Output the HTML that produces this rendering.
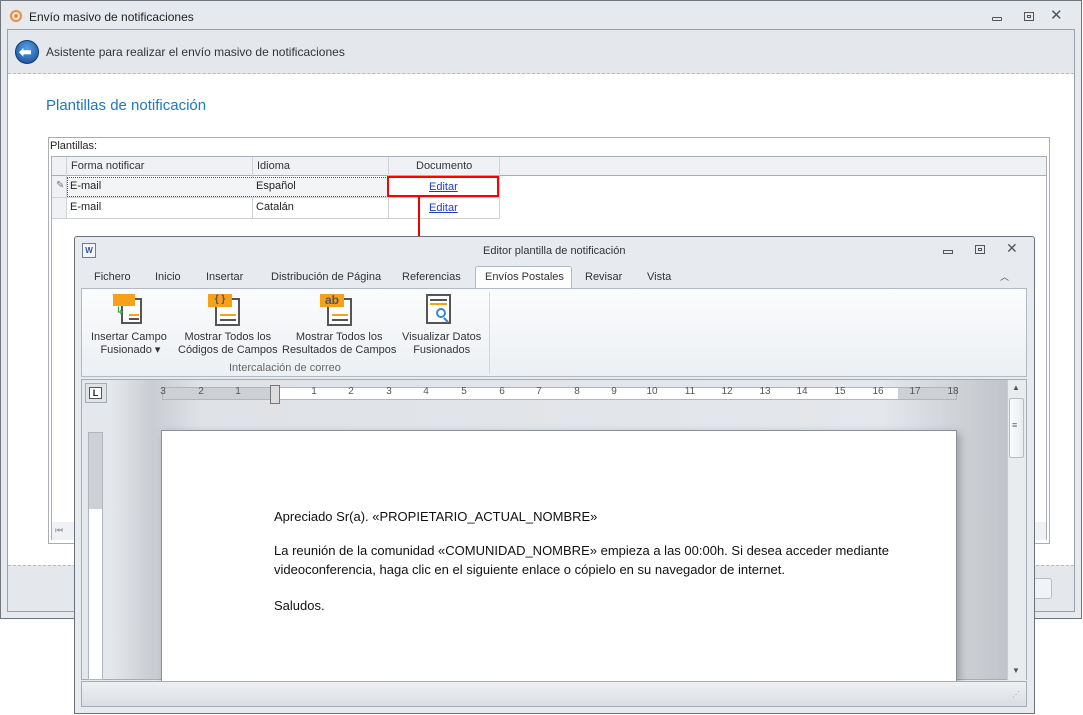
<!DOCTYPE html>
<html><head><meta charset="utf-8"><style>
*{box-sizing:border-box;margin:0;padding:0}
body{width:1083px;height:715px;background:#fff;position:relative;overflow:hidden;font-family:"Liberation Sans",sans-serif;font-size:12px;color:#222}
.a{position:absolute}
.t{position:absolute;white-space:nowrap}
.rn{position:absolute;top:-1px;font-size:10px;color:#555;transform:translateX(-50%)}
</style></head><body>
<!-- outer window -->
<div class="a" style="left:0;top:0;width:1082px;height:619px;background:#e6e9ee;border:1px solid #6f757c"></div>
<div class="a" style="left:10px;top:10px;width:12px;height:12px;border-radius:50%;border:2px solid #f08a3c;"></div>
<div class="a" style="left:14px;top:14px;width:4px;height:4px;border-radius:50%;background:#f08a3c"></div>
<div class="t" style="left:29px;top:10px;font-size:12px;color:#222">Envío masivo de notificaciones</div>
<div class="a" style="left:992px;top:17px;width:10px;height:4px;border:1px solid #555;border-radius:1px"></div>
<div class="a" style="left:1024px;top:12px;width:10px;height:9px;border:1px solid #555"><div style="margin:2px auto;width:4px;height:3px;border:1px solid #555"></div></div>
<div class="t" style="left:1050px;top:6px;font-size:15px;color:#555">✕</div>
<div class="a" style="left:7px;top:29px;width:1068px;height:583px;border:1px solid #9aa0a7;background:#fff"></div>
<div class="a" style="left:8px;top:30px;width:1066px;height:44px;background:#e4e8ed;border-bottom:1px dashed #b5bcc5"></div>
<div class="a" style="left:15px;top:40px;width:24px;height:24px;border-radius:50%;background:radial-gradient(circle at 50% 35%,#5aa0e6,#11468f);border:1px solid #0c3a78"></div>
<div class="t" style="left:19px;top:43px;color:#fff;font-size:15px;font-weight:bold">⬅</div>
<div class="t" style="left:46px;top:45px;font-size:12px;color:#333">Asistente para realizar el envío masivo de notificaciones</div>
<div class="t" style="left:46px;top:97px;font-size:15px;color:#1e78c2">Plantillas de notificación</div>
<div class="a" style="left:8px;top:565px;width:1066px;height:46px;background:#e4e8ed;border-top:1px dashed #b5bcc5"></div>
<div class="a" style="left:1000px;top:578px;width:52px;height:21px;border:1px solid #b8bec6;border-radius:3px;background:#f1f3f6"></div>
<!-- group -->
<div class="a" style="left:48px;top:137px;width:1002px;height:407px;border:1px solid #a9aeb4"></div>
<div class="t" style="left:50px;top:140px;font-size:11px">Plantillas:</div>
<div class="a" style="left:51px;top:156px;width:996px;height:384px;border:1px solid #a9aeb4"></div>
<div class="a" style="left:52px;top:157px;width:994px;height:19px;background:#eff1f5;border-bottom:1px solid #a9aeb4"></div>
<div class="a" style="left:52px;top:157px;width:448px;height:62px;border-right:1px solid #cfd3d8"></div>
<div class="a" style="left:66px;top:157px;width:1px;height:62px;background:#cfd3d8"></div>
<div class="a" style="left:252px;top:157px;width:1px;height:62px;background:#cfd3d8"></div>
<div class="a" style="left:388px;top:157px;width:1px;height:62px;background:#cfd3d8"></div>
<div class="a" style="left:52px;top:176px;width:14px;height:42px;background:#f0f1f4"></div>
<div class="a" style="left:67px;top:177px;width:321px;height:20px;background:#f3f4f6;border:1px dotted #555"></div>
<div class="a" style="left:52px;top:197px;width:448px;height:1px;background:#cfd3d8"></div>
<div class="a" style="left:52px;top:218px;width:448px;height:1px;background:#cfd3d8"></div>
<div class="t" style="left:71px;top:160px;font-size:11px;color:#333">Forma notificar</div>
<div class="t" style="left:257px;top:160px;font-size:11px;color:#333">Idioma</div>
<div class="t" style="left:416px;top:160px;font-size:11px;color:#333">Documento</div>
<div class="t" style="left:56px;top:180px;font-size:10px;color:#777">✎</div>
<div class="t" style="left:70px;top:180px;font-size:11px">E-mail</div>
<div class="t" style="left:256px;top:180px;font-size:11px">Español</div>
<div class="t" style="left:429px;top:181px;font-size:11px;color:#1a3cc8;text-decoration:underline">Editar</div>
<div class="t" style="left:70px;top:201px;font-size:11px">E-mail</div>
<div class="t" style="left:256px;top:201px;font-size:11px">Catalán</div>
<div class="t" style="left:429px;top:202px;font-size:11px;color:#1a3cc8;text-decoration:underline">Editar</div>
<div class="a" style="left:387px;top:176px;width:112px;height:21px;border:2px solid #f00"></div>
<div class="a" style="left:418px;top:197px;width:2px;height:46px;background:#e00"></div>
<div class="a" style="left:414px;top:242px;border-left:5px solid transparent;border-right:5px solid transparent;border-top:9px solid #e00"></div>
<div class="a" style="left:52px;top:522px;width:994px;height:18px;background:#f0f1f4"></div>
<div class="t" style="left:55px;top:525px;font-size:9px;color:#999">⏮</div>
<!-- word window -->
<div class="a" style="left:74px;top:236px;width:961px;height:478px;background:#e7eaef;border:1px solid #6b7178;border-radius:3px 3px 0 0"></div>
<div class="a" style="left:82px;top:243px;width:14px;height:15px;border:1px solid #6b7d99;background:#f4f6fa;font-size:8px;color:#2b579a;font-weight:bold;text-align:center;line-height:13px">W</div>
<div class="t" style="left:483px;top:245px;font-size:11px;color:#333">Editor plantilla de notificación</div>
<div class="a" style="left:943px;top:250px;width:10px;height:4px;border:1px solid #555"></div>
<div class="a" style="left:975px;top:245px;width:10px;height:9px;border:1px solid #555"><div style="margin:2px auto;width:4px;height:3px;border:1px solid #555"></div></div>
<div class="t" style="left:1006px;top:240px;font-size:14px;color:#555">✕</div>
<div class="t" style="left:1000px;top:270px;font-size:9px;color:#555">︿</div>
<div class="t" style="left:94px;top:271px;font-size:11px;color:#333">Fichero</div>
<div class="t" style="left:155px;top:271px;font-size:11px;color:#333">Inicio</div>
<div class="t" style="left:206px;top:271px;font-size:11px;color:#333">Insertar</div>
<div class="t" style="left:271px;top:271px;font-size:11px;color:#333">Distribución de Página</div>
<div class="t" style="left:402px;top:271px;font-size:11px;color:#333">Referencias</div>
<div class="a" style="left:475px;top:266px;width:97px;height:24px;background:#fdfdfe;border:1px solid #b3b9c1;border-bottom:none;border-radius:3px 3px 0 0"></div>
<div class="t" style="left:485px;top:271px;font-size:11px;color:#333">Envíos Postales</div>
<div class="t" style="left:585px;top:271px;font-size:11px;color:#333">Revisar</div>
<div class="t" style="left:647px;top:271px;font-size:11px;color:#333">Vista</div>
<div class="a" style="left:81px;top:288px;width:946px;height:89px;background:linear-gradient(#fbfcfd,#eceff3);border:1px solid #b3b9c1"></div>
<div class="a" style="left:489px;top:292px;width:1px;height:82px;background:#d3d7dc"></div>
<!-- icons -->
<div class="a" style="left:121px;top:298px;width:21px;height:26px;border:2px solid #555;background:#fff"></div>
<div class="a" style="left:113px;top:294px;width:22px;height:12px;background:#f7a11a"></div>
<div class="a" style="left:129px;top:314px;width:10px;height:2px;background:#f7a11a"></div>
<div class="a" style="left:129px;top:318px;width:10px;height:2px;background:#555"></div>
<div class="t" style="left:116px;top:306px;font-size:10px;color:#3aa648;font-weight:bold">↳</div>
<div class="a" style="left:215px;top:298px;width:25px;height:28px;border:2px solid #555;background:#fff"></div>
<div class="a" style="left:208px;top:294px;width:24px;height:13px;background:#f7a11a;color:#555;font-size:10px;font-weight:bold;text-align:center;line-height:12px">{ }</div>
<div class="a" style="left:220px;top:314px;width:16px;height:2px;background:#f7a11a"></div>
<div class="a" style="left:220px;top:319px;width:16px;height:2px;background:#555"></div>
<div class="a" style="left:327px;top:298px;width:25px;height:28px;border:2px solid #555;background:#fff"></div>
<div class="a" style="left:320px;top:294px;width:24px;height:13px;background:#f7a11a;color:#555;font-size:12px;font-weight:bold;text-align:center;line-height:12px">ab</div>
<div class="a" style="left:332px;top:314px;width:16px;height:2px;background:#f7a11a"></div>
<div class="a" style="left:332px;top:319px;width:16px;height:2px;background:#555"></div>
<div class="a" style="left:426px;top:294px;width:25px;height:30px;border:2px solid #555;background:#fff"></div>
<div class="a" style="left:430px;top:299px;width:17px;height:2px;background:#555"></div>
<div class="a" style="left:430px;top:303px;width:17px;height:2px;background:#f7a11a"></div>
<div class="a" style="left:436px;top:308px;width:10px;height:10px;border:2px solid #3b86d0;border-radius:50%"></div>
<div class="a" style="left:445px;top:317px;width:2px;height:6px;background:#3b86d0;transform:rotate(-45deg)"></div>
<div class="t" style="left:91px;top:331px;font-size:11px;color:#333;text-align:center;line-height:13px">Insertar Campo<br>&nbsp;Fusionado ▾</div>
<div class="t" style="left:178px;top:331px;font-size:11px;color:#333;text-align:center;line-height:13px">Mostrar Todos los<br>Códigos de Campos</div>
<div class="t" style="left:282px;top:331px;font-size:11px;color:#333;text-align:center;line-height:13px">Mostrar Todos los<br>Resultados de Campos</div>
<div class="t" style="left:402px;top:331px;font-size:11px;color:#333;text-align:center;line-height:13px">Visualizar Datos<br>Fusionados</div>
<div class="t" style="left:229px;top:362px;font-size:11px;color:#666">Intercalación de correo</div>
<!-- doc area -->
<div class="a" style="left:81px;top:379px;width:946px;height:301px;background:linear-gradient(90deg,#e4e7eb 0,#e4e7eb 30px,#c9cdd2 70px,#dfe2e6 120px,#e4e7eb 800px,#bfc3c8 930px);border:1px solid #a6acb3"></div>
<div class="a" style="left:85px;top:383px;width:22px;height:20px;border:1px solid #a6acb3;background:#dfe3e8"></div>
<div class="a" style="left:89px;top:387px;width:13px;height:12px;border:1px solid #555;background:#fff;font-size:9px;font-weight:bold;line-height:10px;text-align:center">L</div>
<div class="a" style="left:162px;top:387px;width:795px;height:13px;background:#fff;border:1px solid #b1b6bd"></div>
<div class="a" style="left:163px;top:388px;width:113px;height:11px;background:#cdd0d4"></div>
<div class="a" style="left:898px;top:388px;width:58px;height:11px;background:#cdd0d4"></div>
<div class="a" style="left:270px;top:385px;width:10px;height:19px;border:1px solid #777;background:#ddd"></div>
<div class="a" style="left:162px;top:387px;width:795px;height:13px">
<span class="rn" style="left:1px">3</span><span class="rn" style="left:39px">2</span><span class="rn" style="left:76px">1</span>
<span class="rn" style="left:152px">1</span><span class="rn" style="left:189px">2</span><span class="rn" style="left:227px">3</span><span class="rn" style="left:264px">4</span><span class="rn" style="left:302px">5</span><span class="rn" style="left:340px">6</span><span class="rn" style="left:377px">7</span><span class="rn" style="left:415px">8</span><span class="rn" style="left:452px">9</span><span class="rn" style="left:490px">10</span><span class="rn" style="left:528px">11</span><span class="rn" style="left:565px">12</span><span class="rn" style="left:603px">13</span><span class="rn" style="left:640px">14</span><span class="rn" style="left:678px">15</span><span class="rn" style="left:716px">16</span><span class="rn" style="left:753px">17</span><span class="rn" style="left:791px">18</span>
</div>
<div class="a" style="left:88px;top:432px;width:15px;height:248px;background:#fff;border:1px solid #b1b6bd"></div>
<div class="a" style="left:89px;top:433px;width:13px;height:76px;background:#cdd0d4"></div>
<div class="a" style="left:161px;top:430px;width:796px;height:251px;background:#fff;border:1px solid #8c9197;border-bottom:none;box-shadow:3px 3px 8px rgba(0,0,0,.25)"></div>
<div class="t" style="left:274px;top:509px;font-size:13px;color:#111">Apreciado Sr(a). «PROPIETARIO_ACTUAL_NOMBRE»</div>
<div class="t" style="left:274px;top:543px;font-size:13px;color:#111">La reunión de la comunidad «COMUNIDAD_NOMBRE» empieza a las 00:00h. Si desea acceder mediante</div>
<div class="t" style="left:274px;top:562px;font-size:13px;color:#111">videoconferencia, haga clic en el siguiente enlace o cópielo en su navegador de internet.</div>
<div class="t" style="left:274px;top:598px;font-size:13px;color:#111">Saludos.</div>
<div class="a" style="left:1007px;top:380px;width:19px;height:300px;background:#e9ecef;border-left:1px solid #c9cdd2"></div>
<div class="t" style="left:1012px;top:383px;font-size:8px;color:#555">▲</div>
<div class="a" style="left:1009px;top:398px;width:15px;height:60px;border:1px solid #b7bcc3;border-radius:2px;background:linear-gradient(90deg,#fafbfc,#e9ecef)"></div>
<div class="t" style="left:1012px;top:420px;font-size:9px;color:#666">≡</div>
<div class="t" style="left:1012px;top:666px;font-size:8px;color:#555">▼</div>
<div class="a" style="left:81px;top:681px;width:946px;height:26px;background:linear-gradient(#eef0f3,#dadde2);border:1px solid #a6acb3"></div>
<div class="t" style="left:1012px;top:690px;font-size:8px;color:#999">⋰</div>
</body></html>
